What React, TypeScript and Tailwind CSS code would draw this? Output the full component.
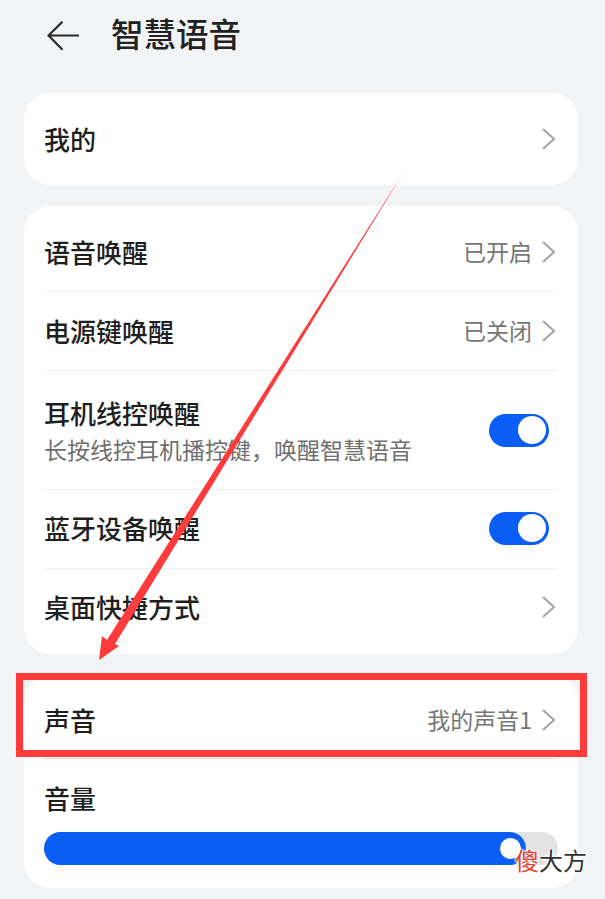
const FONT = 'font-["Noto_Sans_CJK_SC","Noto_Sans",sans-serif]'

function Chevron() {
  return (
    <svg width="14" height="24" viewBox="0 0 14 24" fill="none" className="ml-[10px] mr-[2px] shrink-0">
      <path d="M1 2 L12 12 L1 22" stroke="#a3a3a3" strokeWidth="2" />
    </svg>
  )
}

function Toggle() {
  return (
    <div className="mr-[9px] flex h-[33px] w-[60px] shrink-0 items-center justify-end rounded-full bg-[#0a5ef5] pr-[3px]">
      <div className="size-[28px] rounded-full bg-white" />
    </div>
  )
}

function Divider() {
  return <div className="h-px bg-[#f0f0f2]" />
}

function Row({ label, value, chevron, toggle, height, sub }: {
  label: string
  value?: string
  chevron?: boolean
  toggle?: boolean
  height: string
  sub?: string
}) {
  return (
    <div className={`flex items-center justify-between ${height}`}>
      <div>
        <div className="text-[26px] font-medium leading-[34px] text-[#1f1f1f]">{label}</div>
        {sub && <div className="mt-[4px] text-[23px] leading-[30px] text-[#6f6f6f]">{sub}</div>}
      </div>
      <div className="flex items-center">
        {value && <span className="text-[23px] text-[#767676]">{value}</span>}
        {chevron && <Chevron />}
        {toggle && <Toggle />}
      </div>
    </div>
  )
}

export default function App() {
  return (
    <div className={`relative h-[899px] w-[605px] overflow-hidden bg-[#f1f3f5] ${FONT}`}>
      {/* header */}
      <div className="flex h-[93px] items-start pl-[47px] pt-[11px]">
        <svg width="33" height="30" viewBox="0 0 33 30" fill="none" className="mt-[10px]">
          <path d="M32 14.5 L2 14.5 M15.5 0.7 L1.5 14.5 L15.5 28.8" stroke="#2a2a2a" strokeWidth="2.2" />
        </svg>
        <h1 className="ml-[31px] text-[32.5px] font-medium leading-[44px] text-[#222]">智慧语音</h1>
      </div>

      <div className="flex flex-col gap-[21px] pl-[24px] pr-[27px]">
        <div className="rounded-[26px] bg-white px-[20px]">
          <Row label="我的" chevron height="h-[92px]" />
        </div>

        <div className="rounded-[26px] bg-white px-[20px]">
          <Row label="语音唤醒" value="已开启" chevron height="h-[85px] pt-[6px]" />
          <Divider />
          <Row label="电源键唤醒" value="已关闭" chevron height="h-[78px] pb-[1px]" />
          <Divider />
          <Row label="耳机线控唤醒" sub="长按线控耳机播控键，唤醒智慧语音" toggle height="h-[118px]" />
          <Divider />
          <Row label="蓝牙设备唤醒" toggle height="h-[78px] pb-[2px]" />
          <Divider />
          <Row label="桌面快捷方式" chevron height="h-[85px] pb-[9px]" />
        </div>

        <div className="rounded-[26px] bg-white px-[20px]">
          <Row label="声音" value="我的声音1" chevron height="h-[83px] pt-[6px]" />
          <div className="h-px bg-[#e3dfe3]" />
          <div className="pt-[22px] text-[26px] font-medium leading-[34px] text-[#1f1f1f]">音量</div>
          <div className="mb-[23px] mt-[17px] h-[33px] rounded-full bg-[#e3e3e3]">
            <div className="relative h-full w-[482px] rounded-full bg-[#0a5ef5]">
              <div className="absolute right-[5px] top-[6px] size-[21px] rounded-full bg-white" />
            </div>
          </div>
        </div>
      </div>

      {/* annotation overlay */}
      <div className="absolute left-[16px] top-[673px] h-[84px] w-[571px] border-[7px] border-[#ff3b3b]" />
      <svg width="605" height="899" viewBox="0 0 605 899" className="absolute left-0 top-0">
        <defs>
          <linearGradient id="tail" x1="405" y1="170" x2="390" y2="194" gradientUnits="userSpaceOnUse">
            <stop offset="0" stopColor="#ff3b3b" stopOpacity="0.2" />
            <stop offset="1" stopColor="#ff3b3b" />
          </linearGradient>
        </defs>
        <polygon points="405,170 115,644 119,646 99,660 102,636 107,640" fill="url(#tail)" />
      </svg>

      {/* watermark */}
      <div className="absolute left-[515px] top-[845px] text-[24px] leading-[30px] text-[#333] [text-shadow:0_0_3px_#fff,0_0_3px_#fff,0_0_3px_#fff,0_0_3px_#fff]">
        <span className="text-[#e8402a]">傻</span>大方
      </div>
    </div>
  )
}
